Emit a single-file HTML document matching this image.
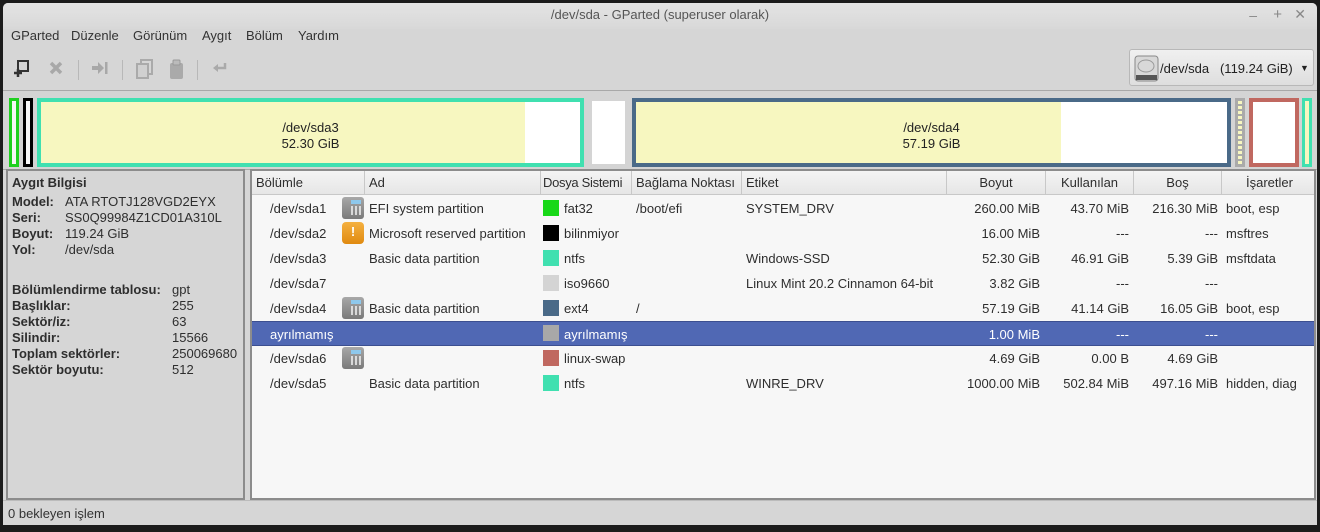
<!DOCTYPE html>
<html><head><meta charset="utf-8"><style>
*{margin:0;padding:0;box-sizing:border-box}
body{width:1320px;height:532px;background:#1c1c1c;font-family:"Liberation Sans","DejaVu Sans",sans-serif;font-size:13px;color:#2e2e2e;position:relative;overflow:hidden}
.a{position:absolute}
#win{left:3px;top:3px;width:1314px;height:522px;background:#d6d6d6;border-radius:5px 5px 0 0;overflow:hidden}
.title{left:0;top:0;width:1314px;height:26px;background:linear-gradient(#e4e4e4,#d8d8d8);text-align:center;line-height:24px;color:#555}
.menu span{position:absolute;top:25px;color:#333}
.sep{width:1px;height:20px;background:#b8b8b8;top:57px}
.map{left:0;top:87px;width:1314px;height:80px;background:#d4d4d4;border-top:1px solid #a8a8a8;border-bottom:1px solid #a8a8a8}
.p{position:absolute;top:7px;height:69px}
.lbl{position:absolute;text-align:center;line-height:16px;color:#222}
.left{left:3px;top:166px;width:239px;height:331px;border:2px solid #8c8c8c;background:#d6d6d6}
.left div{position:absolute;white-space:nowrap}
.b{font-weight:bold}
.tbl{left:247px;top:166px;width:1066px;height:331px;border:2px solid #8c8c8c;background:#f7f7f7;overflow:hidden}
.hd{position:absolute;top:0;height:24px;border-right:1px solid #c8c8c8;border-bottom:1px solid #c8c8c8;background:linear-gradient(#f4f4f4,#e6e6e6);line-height:23px;padding:0 4px;white-space:nowrap;overflow:hidden}
.row{position:absolute;left:0;width:1066px;height:25px;line-height:25px}
.row span{position:absolute;white-space:nowrap}
.r{text-align:right}
.sw{width:16px;height:16px;top:4px}
.ph{width:22px;height:22px;top:1px;border-radius:3px;background:linear-gradient(#a8a8a8,#7a7a7a)}
.ph:after{content:"";position:absolute;left:9px;top:9px;width:10px;height:9px;background:repeating-linear-gradient(90deg,#eee 0 2px,transparent 2px 4px);opacity:.8}
.ph:before{content:"";position:absolute;left:9px;top:3px;width:10px;height:4px;background:#8ec8ec}
.sel{background:#5068b4;color:#fff;border-top:1px solid #3c4f90;border-bottom:1px solid #3c4f90}
.status{left:0;top:497px;width:1314px;height:25px;line-height:25px;padding-left:5px;color:#333;border-top:1px solid #bbb}
</style></head><body>
<div id="win" class="a">
<div class="a title">/dev/sda - GParted (superuser olarak)</div>
<div class="a" style="right:60px;top:4px;color:#888;font-size:14px">–</div>
<div class="a" style="right:35px;top:3px;color:#888;font-size:15px">+</div>
<div class="a" style="right:11px;top:3px;color:#888;font-size:14px">✕</div>
<div class="menu"><span style="left:8px">GParted</span><span style="left:68px">Düzenle</span><span style="left:130px">Görünüm</span><span style="left:199px">Aygıt</span><span style="left:243px">Bölüm</span><span style="left:295px">Yardım</span></div>
<svg class="a" style="left:9px;top:55px" width="20" height="20"><rect x="6" y="3" width="10" height="10" fill="none" stroke="#333" stroke-width="2"/><path d="M2 15h8M6 11v8" stroke="#333" stroke-width="2.5"/></svg>
<svg class="a" style="left:46px;top:58px" width="14" height="14"><path d="M2 2l10 10M12 2L2 12" stroke="#a8a8a8" stroke-width="3.5"/></svg>
<div class="a sep" style="left:75px"></div>
<svg class="a" style="left:88px;top:58px" width="18" height="14"><path d="M1 5h6V1l6 6-6 6V9H1z" fill="#a8a8a8"/><rect x="14" y="1" width="2.5" height="12" fill="#a8a8a8"/></svg>
<div class="a sep" style="left:119px"></div>
<svg class="a" style="left:133px;top:56px" width="18" height="20"><rect x="5" y="1" width="11" height="14" fill="none" stroke="#aaa" stroke-width="2"/><rect x="1" y="5" width="11" height="14" fill="#d0d0d0" stroke="#aaa" stroke-width="2"/></svg>
<svg class="a" style="left:165px;top:56px" width="18" height="22"><rect x="2" y="4" width="13" height="16" rx="2" fill="#aaa"/><rect x="5" y="1" width="7" height="5" rx="1" fill="#bbb" stroke="#999"/></svg>
<div class="a sep" style="left:194px"></div>
<svg class="a" style="left:209px;top:59px" width="16" height="12"><path d="M13 1v5H4" fill="none" stroke="#aaa" stroke-width="2.5"/><path d="M1 6l5-4v8z" fill="#aaa"/></svg>
<div class="a" style="left:1126px;top:46px;width:185px;height:37px;border:1px solid #b8b8b8;border-radius:3px;background:linear-gradient(#f0f0f0,#dedede)"></div>
<svg class="a" style="left:1131px;top:52px" width="26" height="28"><rect x="1" y="1" width="23" height="25" rx="3" fill="#d8d8d8" stroke="#888"/><ellipse cx="12" cy="11" rx="8" ry="6" fill="none" stroke="#999"/><rect x="2" y="20" width="21" height="5" fill="#555"/></svg>
<div class="a" style="left:1157px;top:58px;color:#222">/dev/sda&nbsp;&nbsp;&nbsp;(119.24 GiB)</div>
<div class="a" style="left:1297px;top:60px;font-size:9px;color:#222">▼</div>
<div class="a map">
 <div class="p" style="left:6px;width:10px;border:3px solid #20d020;background:#f7f7f7"></div>
 <div class="p" style="left:20px;width:10px;border:3px solid #000;background:#f7f7f7"></div>
 <div class="p" style="left:34px;width:547px;border:4px solid #40e0b0;background:linear-gradient(90deg,#f7f7c0 0 484px,#fff 484px)"><div class="lbl" style="left:0;width:539px;top:18px">/dev/sda3<br>52.30 GiB</div></div>
 <div class="p" style="left:589px;width:33px;top:10px;height:63px;background:#fff"></div>
 <div class="p" style="left:629px;width:599px;border:4px solid #4a6a88;background:linear-gradient(90deg,#f7f7c0 0 425px,#fff 425px)"><div class="lbl" style="left:0;width:591px;top:18px">/dev/sda4<br>57.19 GiB</div></div>
 <div class="p" style="left:1232px;width:10px;border:3px solid #aaa;background:repeating-linear-gradient(#f7f7c0 0 3px,#aaa 3px 5px)"></div>
 <div class="p" style="left:1246px;width:50px;border:4px solid #c06860;background:#fff"></div>
 <div class="p" style="left:1299px;width:10px;border:3px solid #40e0b0;background:#f7f7c0"></div>
</div>
<div class="a left">
 <div class="b" style="left:4px;top:4px">Aygıt Bilgisi</div>
 <div class="b" style="left:4px;top:23px">Model:</div><div style="left:57px;top:23px">ATA RTOTJ128VGD2EYX</div>
 <div class="b" style="left:4px;top:39px">Seri:</div><div style="left:57px;top:39px">SS0Q99984Z1CD01A310L</div>
 <div class="b" style="left:4px;top:55px">Boyut:</div><div style="left:57px;top:55px">119.24 GiB</div>
 <div class="b" style="left:4px;top:71px">Yol:</div><div style="left:57px;top:71px">/dev/sda</div>
 <div class="b" style="left:4px;top:111px">Bölümlendirme tablosu:</div><div style="left:164px;top:111px">gpt</div>
 <div class="b" style="left:4px;top:127px">Başlıklar:</div><div style="left:164px;top:127px">255</div>
 <div class="b" style="left:4px;top:143px">Sektör/iz:</div><div style="left:164px;top:143px">63</div>
 <div class="b" style="left:4px;top:159px">Silindir:</div><div style="left:164px;top:159px">15566</div>
 <div class="b" style="left:4px;top:175px">Toplam sektörler:</div><div style="left:164px;top:175px">250069680</div>
 <div class="b" style="left:4px;top:191px">Sektör boyutu:</div><div style="left:164px;top:191px">512</div>
</div>
<div class="a tbl">
 <div class="hd" style="left:0;width:113px">Bölümle</div>
 <div class="hd" style="left:113px;width:176px">Ad</div>
 <div class="hd" style="left:289px;width:91px;padding:0 2px;letter-spacing:-0.3px">Dosya Sistemi</div>
 <div class="hd" style="left:380px;width:110px">Bağlama Noktası</div>
 <div class="hd" style="left:490px;width:205px">Etiket</div>
 <div class="hd" style="left:695px;width:99px;text-align:center">Boyut</div>
 <div class="hd" style="left:794px;width:88px;text-align:center">Kullanılan</div>
 <div class="hd" style="left:882px;width:88px;text-align:center">Boş</div>
 <div class="hd" style="left:970px;width:96px;text-align:center">İşaretler</div>
 <div class="row" style="top:25px"><span style="left:18px">/dev/sda1</span><span class="ph" style="left:90px"></span><span style="left:117px">EFI system partition</span><span class="sw" style="left:291px;background:#18d818"></span><span style="left:312px">fat32</span><span style="left:384px">/boot/efi</span><span style="left:494px">SYSTEM_DRV</span><span class="r" style="right:278px">260.00 MiB</span><span class="r" style="right:189px">43.70 MiB</span><span class="r" style="right:100px">216.30 MiB</span><span style="left:974px">boot, esp</span></div>
 <div class="row" style="top:50px"><span style="left:18px">/dev/sda2</span><span style="left:90px;top:1px;width:22px;height:22px;border-radius:4px;background:linear-gradient(#f4b040,#e08a10);color:#fff;font-weight:bold;text-align:center;line-height:20px">!</span><span style="left:117px">Microsoft reserved partition</span><span class="sw" style="left:291px;background:#000"></span><span style="left:312px">bilinmiyor</span><span class="r" style="right:278px">16.00 MiB</span><span class="r" style="right:189px">---</span><span class="r" style="right:100px">---</span><span style="left:974px">msftres</span></div>
 <div class="row" style="top:75px"><span style="left:18px">/dev/sda3</span><span style="left:117px">Basic data partition</span><span class="sw" style="left:291px;background:#40e0b0"></span><span style="left:312px">ntfs</span><span style="left:494px">Windows-SSD</span><span class="r" style="right:278px">52.30 GiB</span><span class="r" style="right:189px">46.91 GiB</span><span class="r" style="right:100px">5.39 GiB</span><span style="left:974px">msftdata</span></div>
 <div class="row" style="top:100px"><span style="left:18px">/dev/sda7</span><span class="sw" style="left:291px;background:#d4d4d4"></span><span style="left:312px">iso9660</span><span style="left:494px">Linux Mint 20.2 Cinnamon 64-bit</span><span class="r" style="right:278px">3.82 GiB</span><span class="r" style="right:189px">---</span><span class="r" style="right:100px">---</span></div>
 <div class="row" style="top:125px"><span style="left:18px">/dev/sda4</span><span class="ph" style="left:90px"></span><span style="left:117px">Basic data partition</span><span class="sw" style="left:291px;background:#4a6a88"></span><span style="left:312px">ext4</span><span style="left:384px">/</span><span class="r" style="right:278px">57.19 GiB</span><span class="r" style="right:189px">41.14 GiB</span><span class="r" style="right:100px">16.05 GiB</span><span style="left:974px">boot, esp</span></div>
 <div class="row sel" style="top:150px"><span style="left:18px">ayrılmamış</span><span class="sw" style="left:291px;top:3px;background:#a8a8a8"></span><span style="left:312px">ayrılmamış</span><span class="r" style="right:278px">1.00 MiB</span><span class="r" style="right:189px">---</span><span class="r" style="right:100px">---</span></div>
 <div class="row" style="top:175px"><span style="left:18px">/dev/sda6</span><span class="ph" style="left:90px"></span><span class="sw" style="left:291px;background:#c06860"></span><span style="left:312px">linux-swap</span><span class="r" style="right:278px">4.69 GiB</span><span class="r" style="right:189px">0.00 B</span><span class="r" style="right:100px">4.69 GiB</span></div>
 <div class="row" style="top:200px"><span style="left:18px">/dev/sda5</span><span style="left:117px">Basic data partition</span><span class="sw" style="left:291px;background:#40e0b0"></span><span style="left:312px">ntfs</span><span style="left:494px">WINRE_DRV</span><span class="r" style="right:278px">1000.00 MiB</span><span class="r" style="right:189px">502.84 MiB</span><span class="r" style="right:100px">497.16 MiB</span><span style="left:974px">hidden, diag</span></div>
</div>
<div class="a status">0 bekleyen işlem</div>
</div>
</body></html>
